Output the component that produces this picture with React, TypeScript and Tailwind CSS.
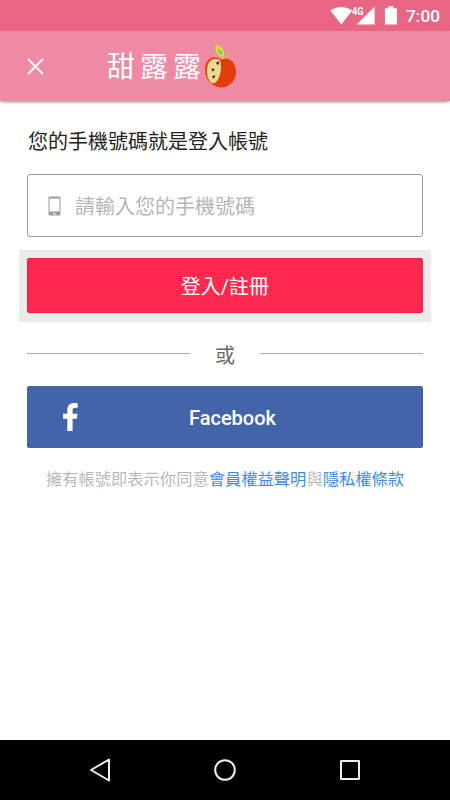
const cjkFont = "font-['Roboto','Noto_Sans_CJK_TC',sans-serif]";

function StatusBar() {
  return (
    <div className="flex h-[31px] shrink-0 items-center bg-[#e86684] text-white">
      <svg width="75" height="31" viewBox="330 0 75 31" className="ml-[330px]" fill="currentColor">
        {/* wifi */}
        <path d="M330.4 10.5C336.8 5.7 345.8 5.7 352.2 10.5L341.3 24.4Z" />
        <text x="352" y="15" fontSize="11" fontWeight="700" fontFamily="Roboto, sans-serif" textLength="11.5" lengthAdjust="spacingAndGlyphs">
          4G
        </text>
        {/* signal */}
        <path d="M374.7 6.6V24.6H356.7Z" />
        {/* battery */}
        <path d="M388.4 6.3h5v1.9h3.5v16.3h-12V8.2h3.5Z" />
      </svg>
      <span className="ml-px pt-[3px] text-[17.3px] leading-none font-medium">7:00</span>
    </div>
  );
}

function AppleLogo() {
  return (
    <svg width="34" height="46" viewBox="26 12 102 138" className="mt-px ml-[-2px]">
      <path d="M77 59C54 41 28 58 29 91c1 32 29 55 54 51 26-3 42-28 39-52-4-32-29-40-45-31Z" fill="#e43d0c" />
      <path d="M70 58c-15-6-31 4-34 23-5 28 7 48 18 49 13 0 22-26 23-46 0-13-1-22-7-26Z" fill="#efd990" />
      <path d="M63 69l7-4-2 9zM50 86l7 3-6 4zM51 110l8-3-4 8z" fill="#29160c" stroke="#29160c" strokeWidth="2" />
      <path d="M61 15c20 2 30 18 24 37-19-4-28-18-24-37Z" fill="#d9df27" />
      <path d="M69 27c7 3 11 9 12 18-8-4-12-10-12-18Z" fill="#43bdbb" />
      <path d="M81 56c7-2 14-11 24-14" fill="none" stroke="#c4d52f" strokeWidth="3.5" />
    </svg>
  );
}

function Header() {
  return (
    <header className="flex h-[70px] shrink-0 items-center bg-[#ef8aa4] pl-[27px] text-white shadow-[0_2px_3px_-1px_rgba(0,0,0,0.45)]">
      <svg width="17" height="17" viewBox="0 0 17 17" fill="none" stroke="currentColor" strokeWidth="2">
        <path d="M1 1l15 15M16 1L1 16" />
      </svg>
      <h1 className="ml-[63px] pt-1 text-[28px] leading-none font-normal tracking-[5px]">甜露露</h1>
      <AppleLogo />
    </header>
  );
}

function PhoneField() {
  return (
    <div className="mt-[18px] flex h-[63px] items-center rounded-[3px] border border-[#999] pl-5">
      <svg width="13" height="20" viewBox="0 0 13 20">
        <rect x="0.5" y="0.5" width="12" height="19" rx="1.5" fill="#999" />
        <rect x="1.5" y="2.5" width="10" height="13" fill="#fff" />
        <rect x="5.5" y="17" width="2" height="1.5" fill="#fff" />
      </svg>
      <span className="ml-3.5 pt-0.5 text-xl text-[#b5b5b5]">請輸入您的手機號碼</span>
    </div>
  );
}

function Divider() {
  return (
    <div className="mt-[18px] flex h-7 items-center">
      <div className="h-px flex-1 bg-[#aaa]" />
      <span className="w-[70px] pt-[5px] text-center text-xl leading-7 text-[#666]">或</span>
      <div className="h-px flex-1 bg-[#aaa]" />
    </div>
  );
}

function NavBar() {
  return (
    <nav className="flex h-[60px] shrink-0 items-center justify-between bg-black px-[89px]">
      <svg width="22" height="24" viewBox="0 0 22 24" fill="none" stroke="#eee" strokeWidth="2" strokeLinejoin="round">
        <path d="M20 1.5v21L2 12Z" />
      </svg>
      <svg width="22" height="22" viewBox="0 0 22 22" fill="none" stroke="#eee" strokeWidth="2">
        <circle cx="11" cy="11" r="9.8" />
      </svg>
      <svg width="22" height="22" viewBox="0 0 22 22" fill="none" stroke="#eee" strokeWidth="2" strokeLinejoin="round">
        <path d="M2 2h18v18H2Z" />
      </svg>
    </nav>
  );
}

export default function App() {
  return (
    <div className={`flex h-[800px] w-[450px] flex-col overflow-hidden bg-white ${cjkFont}`}>
      <StatusBar />
      <Header />

      <main className="flex-1 px-[27px] pt-[27px]">
        <h2 className="pl-px text-xl text-[#222]">您的手機號碼就是登入帳號</h2>
        <PhoneField />

        {/* Pressed area behind the login button */}
        <div className="-mx-2 mt-[12.5px] bg-[#ebebeb] px-2 py-[8.5px]">
          <button className="block h-[55px] w-full rounded-[2px] border border-[#ff1744] bg-[#ff284f] pt-0.5 text-xl leading-none text-white">
            登入/註冊
          </button>
        </div>

        <Divider />

        <button className="mt-[18.5px] flex h-[62px] w-full items-center rounded-[2px] bg-[#4464a9] text-white">
          <svg width="15" height="28" viewBox="0 0 15 28" className="ml-9" fill="currentColor">
            <path d="M4.3 28V15.7H0V10.7h4.3V7.2C4.3 2.5 7 0 11.2 0c1.6 0 2.8.1 3.5.2v4.6h-2.6c-2.1 0-2.5 1.1-2.5 2.7v3.2h4.9l-.7 5H9.6V28Z" />
          </svg>
          <span className="flex-1 pt-px pr-9 text-center text-xl font-medium">Facebook</span>
        </button>

        <p className="mt-5 -mr-1 -ml-1 text-center text-[16.3px] leading-6 whitespace-nowrap text-[#b8b8b8]">
          擁有帳號即表示你同意<a className="text-[#3b8be5]">會員權益聲明</a>與<a className="text-[#3b8be5]">隱私權條款</a>
        </p>
      </main>

      <NavBar />
    </div>
  );
}
